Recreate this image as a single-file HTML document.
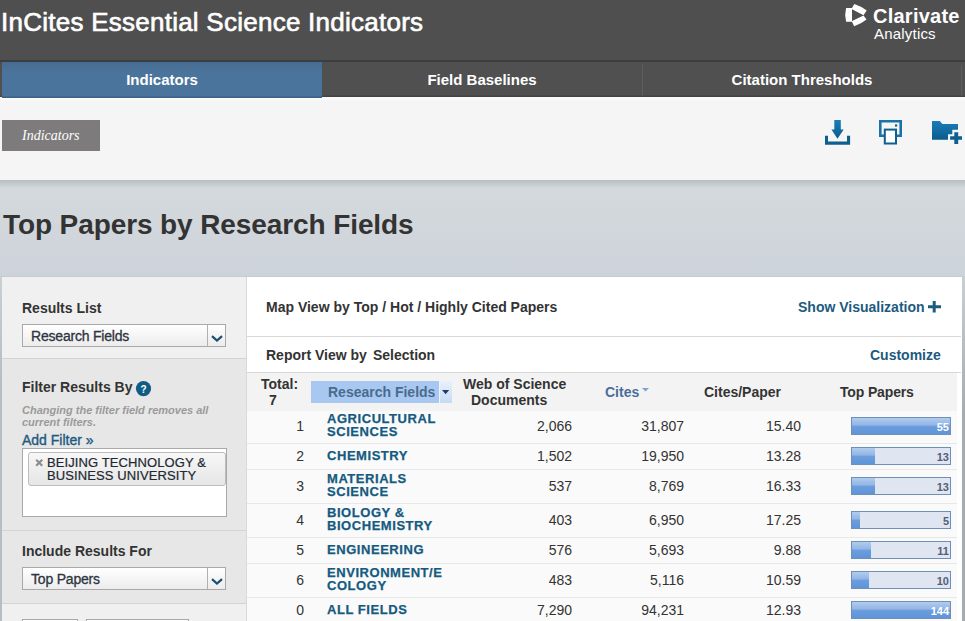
<!DOCTYPE html>
<html><head><meta charset="utf-8">
<style>
*{box-sizing:border-box;margin:0;padding:0}
html,body{width:965px;height:621px;overflow:hidden}
body{position:relative;background:linear-gradient(#d2d9dc 0,#d3d9dc 190px,#cdd3da 277px,#cdd3da);font-family:"Liberation Sans",sans-serif;color:#333}
.a{position:absolute}
.t{position:absolute;white-space:nowrap;font-size:14px;line-height:16px}
.b{font-weight:bold}
#hdr{left:0;top:0;width:965px;height:60px;background:#4f4f4f}
#hdrline{left:0;top:60px;width:965px;height:2px;background:#3b3d40}
#tabs{left:0;top:62px;width:965px;height:35px;background:linear-gradient(#505050 33px,#434343 34px,#434343)}
.tab{top:62px;height:35px;color:#fff;font-weight:bold;font-size:15px;line-height:35px;text-align:center}
#tab1{z-index:2;left:2px;width:320px;height:36px!important;background:linear-gradient(#476c91,#4b749c 30%,#4a749c 94%,#3e6285 97%,#3e6285)}
#tab2{left:322px;width:320px}
#tab3{left:642px;width:320px}
.sep{top:65px;width:1px;height:31px;background:#5e5e5e}
#title{left:1px;top:7px;color:#fff;font-size:26px;line-height:30px;letter-spacing:0.25px;-webkit-text-stroke:0.65px #fff}
#tool{left:0;top:97px;width:965px;height:83px;background:linear-gradient(#fafafa,#fbfbfb 2px,#f5f5f5 4px,#f5f5f5)}
#shadow{left:0;top:180px;width:965px;height:8px;background:linear-gradient(#b9bdc0,#d2d9dc)}
#btnInd{left:2px;top:120px;width:98px;height:31px;background:#7d7b7c;color:#fff;font-family:"Liberation Serif",serif;font-style:italic;font-size:14px;line-height:31px;padding-left:20px}
#pt{left:3px;top:209px;font-size:28px;line-height:32px;font-weight:bold;color:#333;letter-spacing:-0.1px}
#lpedge{left:0;top:277px;width:2px;height:344px;background:linear-gradient(#c8d0d4,#b4bec4 30%,#b4bec4)}
#lp{left:2px;top:277px;width:244px;height:344px;background:#f0f0f0}
#lpb{left:246px;top:277px;width:1px;height:344px;background:#d9d9d9}
#rp{left:247px;top:277px;width:715px;height:344px;background:#fff}
#rpedge{left:962px;top:277px;width:3px;height:344px;background:linear-gradient(#c9ced1,#a5abaf 40%,#a5abaf)}
.dd{position:absolute;left:22px;width:204px;height:23px;border:1px solid #a9a9a9;background:linear-gradient(#fff,#ececec)}
.dd .v{position:absolute;left:184px;top:0;width:1px;height:21px;background:#b0b0b0}
.dd svg{position:absolute;left:188px;top:10px}
.ddt{font-size:14px;letter-spacing:-0.2px;color:#2e3440;-webkit-text-stroke:0.3px #2e3440}
.lnk{color:#1d5a80}
.hd{color:#333}
.num{font-size:14px;color:#333;text-align:right}
.fld{font-size:13px;line-height:13px;letter-spacing:0.55px;font-weight:bold;color:#155a80;-webkit-text-stroke:0.25px #155a80}
.rsep{position:absolute;left:247px;width:710px;height:1px;background:#e8e8e8}
.bar{position:absolute;left:851px;width:100px;height:18px;border:1px solid #6f8fb6;background:#dfe6f2}
.bar i{position:absolute;left:0;top:0;bottom:0;background:linear-gradient(#b1ccee,#92b5e6 45%,#6c9edd 50%,#5f94d9)}
.bar b{position:absolute;right:1px;top:2px;font-size:11px;line-height:14px;color:#556077}
.bar.full b{color:#fff}
</style></head><body>
<div class="a" id="hdr"></div>
<div class="a" id="hdrline"></div>
<div class="t" id="title">InCites Essential Science Indicators</div>
<svg class="a" style="left:840px;top:0" width="30" height="32" viewBox="840 0 30 32">
<path fill="#fff" d="M846.1 7.9 H852 V21.7 H846.1 Q844.3 14.8 846.1 7.9Z"/>
<path fill="#fff" d="M852 7.9 L854.3 3.9 Q861 6 866.7 10.6 L863.5 15.2 L851.6 8.9Z"/>
<path fill="#fff" d="M852 21.7 L854.1 26.3 Q861 24.2 866.5 19.6 L863.5 15.4 L851.6 21.3Z"/>
</svg>
<div class="t b" style="left:873px;top:5px;font-size:20px;line-height:22px;letter-spacing:0.25px;color:#fff">Clarivate</div>
<div class="t" style="left:874px;top:26px;font-size:15px;line-height:16px;letter-spacing:0.2px;color:#fff">Analytics</div>

<div class="a" id="tabs"></div>
<div class="a tab" id="tab1">Indicators</div>
<div class="a tab" id="tab2">Field Baselines</div>
<div class="a tab" id="tab3">Citation Thresholds</div>
<div class="a sep" style="left:642px"></div>
<div class="a sep" style="left:961px"></div>

<div class="a" id="tool"></div>
<div class="a" id="shadow"></div>
<div class="a" id="btnInd">Indicators</div>
<!-- download icon -->
<svg class="a" style="left:820px;top:115px" width="36" height="36" viewBox="820 115 36 36">
<defs><linearGradient id="ig" x1="0" y1="0" x2="0" y2="1"><stop offset="0" stop-color="#1a7db8"/><stop offset="1" stop-color="#0b5b8c"/></linearGradient></defs>
<path fill="url(#ig)" d="M834.3 120 H840.8 V129.4 H843.7 L837.5 138.7 L831.4 129.4 H834.3Z"/>
<path fill="#0d5f90" d="M825 135.8 H828 V141.6 H847 V135.8 H850.1 V144.8 H825Z"/>
</svg>
<!-- print icon -->
<svg class="a" style="left:875px;top:115px" width="32" height="34" viewBox="875 115 32 34">
<path fill="#1a72a8" fill-rule="evenodd" d="M879 120 H902 V137.1 H879Z M881.6 122.6 V134.5 H899.4 V122.6Z"/>
<rect x="884.8" y="129.6" width="11.2" height="13.9" fill="#fff" stroke="#0f5f91" stroke-width="2"/>
<rect x="895" y="124.4" width="2.2" height="2.2" fill="#0f5f91"/>
</svg>
<!-- folder icon -->
<svg class="a" style="left:928px;top:115px" width="37" height="32" viewBox="928 115 37 32">
<path fill="url(#ig)" d="M932 121 H939.8 L942.4 123.9 H958 V129.7 H952.3 V134.2 H948 V139.7 H932Z"/>
<path fill="#0d5f90" d="M954.3 132.3 H958.2 V136.2 H962 V139.8 H958.2 V143.9 H954.3 V139.8 H950.1 V136.2 H954.3Z"/>
</svg>

<div class="t" id="pt">Top Papers by Research Fields</div>

<div class="a" style="left:0;top:276px;width:965px;height:1px;background:#c7cccd"></div>
<div class="a" id="lpedge"></div>
<div class="a" id="lp"></div>
<div class="a" style="left:2px;top:358px;width:244px;height:1px;background:#d4d4d4"></div>
<div class="a" style="left:2px;top:359px;width:244px;height:171px;background:#e7e7e7"></div>
<div class="a" style="left:2px;top:530px;width:244px;height:1px;background:#d4d4d4"></div>
<div class="a" style="left:2px;top:531px;width:244px;height:72px;background:#e7e7e7"></div>
<div class="a" style="left:2px;top:603px;width:244px;height:1px;background:#d4d4d4"></div>
<div class="a" id="lpb"></div>

<div class="t b" style="left:22px;top:300px">Results List</div>
<div class="dd" style="top:324px"><div class="v"></div><svg width="12" height="8" viewBox="0 0 12 8"><path d="M1 1.2 L6 5.6 L11 1.2" fill="none" stroke="#1b4f70" stroke-width="2.2"/></svg></div>
<div class="t ddt" style="left:31px;top:328px">Research Fields</div>

<div class="t b" style="left:22px;top:379px">Filter Results By</div>
<svg class="a" style="left:135px;top:380px" width="17" height="17" viewBox="0 0 17 17"><circle cx="8.5" cy="8.6" r="7.6" fill="#115b87"/><text x="8.5" y="12.6" text-anchor="middle" font-family="Liberation Sans" font-weight="bold" font-size="10" fill="#fff">?</text></svg>
<div class="t b" style="left:22px;top:404px;font-size:11px;line-height:12px;font-style:italic;color:#9a9a9a">Changing the filter field removes all<br>current filters.</div>
<div class="t lnk" style="left:22px;top:432px;-webkit-text-stroke:0.35px #1d5a80">Add Filter »</div>
<div class="a" style="left:22px;top:448px;width:205px;height:69px;border:1px solid #a9a9a9;background:#fff"></div>
<div class="a" style="left:28px;top:452px;width:198px;height:34px;border:1px solid #bcbcbc;border-radius:3px;background:linear-gradient(#f7f7f7,#e6e6e6)"></div>
<svg class="a" style="left:34px;top:458px" width="10" height="10" viewBox="0 0 10 10"><path d="M2.2 1.8 L8.2 7.8 M8.2 1.8 L2.2 7.8" stroke="#8c8c8c" stroke-width="2.1"/></svg>
<div class="t" style="left:47px;top:456px;font-size:13px;line-height:13px;letter-spacing:0.1px;color:#222831;-webkit-text-stroke:0.2px #222831">BEIJING TECHNOLOGY &amp;<br>BUSINESS UNIVERSITY</div>

<div class="t b" style="left:22px;top:543px">Include Results For</div>
<div class="dd" style="top:567px"><div class="v"></div><svg width="12" height="8" viewBox="0 0 12 8"><path d="M1 1.2 L6 5.6 L11 1.2" fill="none" stroke="#1b4f70" stroke-width="2.2"/></svg></div>
<div class="t ddt" style="left:31px;top:571px">Top Papers</div>
<div class="a" style="left:22px;top:619px;width:56px;height:10px;border:1px solid #a9a9a9;background:#fff"></div>
<div class="a" style="left:86px;top:619px;width:103px;height:10px;border:1px solid #a9a9a9;background:#fff"></div>

<div class="a" id="rp"></div>
<div class="a" id="rpedge"></div>
<div class="t b" style="left:266px;top:299px">Map View by<span style="margin-left:4px">Top / Hot / Highly Cited Papers</span></div>
<div class="t b lnk" style="left:798px;top:299px">Show Visualization</div>
<svg class="a" style="left:927px;top:300px" width="15" height="14" viewBox="0 0 15 14"><path d="M7.2 1 V12.4 M1 6.7 H14" stroke="#1d5a80" stroke-width="3"/></svg>
<div class="a" style="left:247px;top:336px;width:714px;height:1px;background:#d8d8d8"></div>
<div class="t b" style="left:266px;top:347px">Report View by<span style="margin-left:6px">Selection</span></div>
<div class="t b lnk" style="left:870px;top:347px">Customize</div>
<div class="a" style="left:247px;top:372px;width:714px;height:1px;background:#d8d8d8"></div>
<div class="a" style="left:247px;top:373px;width:710px;height:38px;background:#f3f3f3"></div>
<div class="a" style="left:247px;top:411px;width:710px;height:210px;background:#fafafa"></div>

<div class="t b" style="left:261px;top:376px">Total:</div>
<div class="t b" style="left:269px;top:392px">7</div>
<div class="a" style="left:311px;top:381px;width:128px;height:22px;background:#a9c8f1"></div>
<div class="a" style="left:440px;top:381px;width:12px;height:22px;background:linear-gradient(#e9f1fb,#c6daf5)"></div>
<svg class="a" style="left:442px;top:390px" width="8" height="5" viewBox="0 0 8 5"><path d="M0 0 H7.2 L3.6 4.2Z" fill="#243a6c"/></svg>
<div class="t b" style="left:328px;top:384px;color:#4a6b8d">Research Fields</div>
<div class="t b" style="left:463px;top:376px">Web of Science</div>
<div class="t b" style="left:471px;top:392px">Documents</div>
<div class="t b" style="left:605px;top:384px;color:#4a6e99">Cites</div>
<svg class="a" style="left:642px;top:388px" width="8" height="5" viewBox="0 0 8 5"><path d="M0 0 H7 L3.5 3.6Z" fill="#7fa3cf"/></svg>
<div class="t b" style="left:704px;top:384px">Cites/Paper</div>
<div class="t b" style="left:840px;top:384px;letter-spacing:-0.15px">Top Papers</div>

<!-- row separators -->
<div class="rsep" style="top:443px"></div>
<div class="rsep" style="top:469px"></div>
<div class="rsep" style="top:503px"></div>
<div class="rsep" style="top:537px"></div>
<div class="rsep" style="top:563px"></div>
<div class="rsep" style="top:597px"></div>

<!-- rows -->
<div class="t num" style="left:280px;width:24px;top:418px">1</div>
<div class="t fld" style="left:327px;top:412px">AGRICULTURAL<br>SCIENCES</div>
<div class="t num" style="left:500px;width:72px;top:418px">2,066</div>
<div class="t num" style="left:600px;width:84px;top:418px">31,807</div>
<div class="t num" style="left:720px;width:81px;top:418px">15.40</div>
<div class="bar full" style="top:417px"><i style="width:98px"></i><b style="color:#fff">55</b></div>

<div class="t num" style="left:280px;width:24px;top:448px">2</div>
<div class="t fld" style="left:327px;top:449px">CHEMISTRY</div>
<div class="t num" style="left:500px;width:72px;top:448px">1,502</div>
<div class="t num" style="left:600px;width:84px;top:448px">19,950</div>
<div class="t num" style="left:720px;width:81px;top:448px">13.28</div>
<div class="bar" style="top:447px"><i style="width:23px"></i><b>13</b></div>

<div class="t num" style="left:280px;width:24px;top:478px">3</div>
<div class="t fld" style="left:327px;top:472px">MATERIALS<br>SCIENCE</div>
<div class="t num" style="left:500px;width:72px;top:478px">537</div>
<div class="t num" style="left:600px;width:84px;top:478px">8,769</div>
<div class="t num" style="left:720px;width:81px;top:478px">16.33</div>
<div class="bar" style="top:477px"><i style="width:23px"></i><b>13</b></div>

<div class="t num" style="left:280px;width:24px;top:512px">4</div>
<div class="t fld" style="left:327px;top:506px">BIOLOGY &amp;<br>BIOCHEMISTRY</div>
<div class="t num" style="left:500px;width:72px;top:512px">403</div>
<div class="t num" style="left:600px;width:84px;top:512px">6,950</div>
<div class="t num" style="left:720px;width:81px;top:512px">17.25</div>
<div class="bar" style="top:511px"><i style="width:8px"></i><b>5</b></div>

<div class="t num" style="left:280px;width:24px;top:542px">5</div>
<div class="t fld" style="left:327px;top:543px">ENGINEERING</div>
<div class="t num" style="left:500px;width:72px;top:542px">576</div>
<div class="t num" style="left:600px;width:84px;top:542px">5,693</div>
<div class="t num" style="left:720px;width:81px;top:542px">9.88</div>
<div class="bar" style="top:541px"><i style="width:19px"></i><b>11</b></div>

<div class="t num" style="left:280px;width:24px;top:572px">6</div>
<div class="t fld" style="left:327px;top:566px">ENVIRONMENT/E<br>COLOGY</div>
<div class="t num" style="left:500px;width:72px;top:572px">483</div>
<div class="t num" style="left:600px;width:84px;top:572px">5,116</div>
<div class="t num" style="left:720px;width:81px;top:572px">10.59</div>
<div class="bar" style="top:571px"><i style="width:17px"></i><b>10</b></div>

<div class="t num" style="left:280px;width:24px;top:602px">0</div>
<div class="t fld" style="left:327px;top:603px">ALL FIELDS</div>
<div class="t num" style="left:500px;width:72px;top:602px">7,290</div>
<div class="t num" style="left:600px;width:84px;top:602px">94,231</div>
<div class="t num" style="left:720px;width:81px;top:602px">12.93</div>
<div class="bar full" style="top:601px"><i style="width:98px"></i><b style="color:#fff">144</b></div>

</body></html>
